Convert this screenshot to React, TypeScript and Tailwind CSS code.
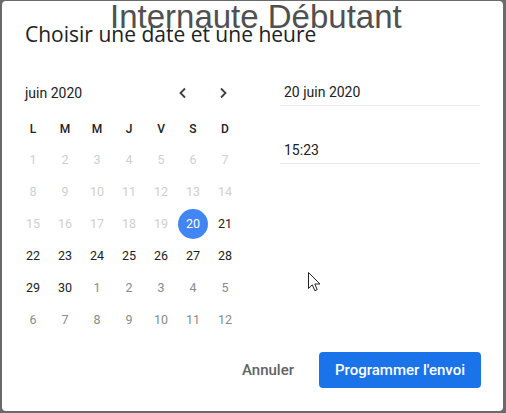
import React from 'react';

const weekDays = ['L', 'M', 'M', 'J', 'V', 'S', 'D'];

type Day = { n: number; kind: 'past' | 'cur' | 'next' | 'sel' };

function buildDays(): Day[] {
  const days: Day[] = [];
  for (let i = 1; i <= 30; i++) {
    days.push({ n: i, kind: i < 20 ? 'past' : i === 20 ? 'sel' : 'cur' });
  }
  for (let i = 1; i <= 12; i++) days.push({ n: i, kind: 'next' });
  return days;
}

const dayColor: Record<Day['kind'], string> = {
  past: 'text-[#cfcfcf]',
  cur: 'text-[#202124]',
  next: 'text-[#8a8a8a]',
  sel: 'text-white',
};

function Chevron({ dir }: { dir: 'left' | 'right' }) {
  return (
    <svg width="10" height="12" viewBox="0 0 10 12" fill="none">
      <path
        d={dir === 'left' ? 'M7 1.5 2.5 6 7 10.5' : 'M3 1.5 7.5 6 3 10.5'}
        stroke="#3c4043"
        strokeWidth="1.8"
      />
    </svg>
  );
}

function Calendar() {
  const days = buildDays();
  return (
    <div className="w-[224px] ml-[15px]">
      <div className="flex h-8 items-center justify-between pl-2 pr-[6px]">
        <span className="text-[14px] text-[#202124]">juin 2020</span>
        <div className="flex gap-4">
          <button className="flex h-6 w-6 items-center justify-center">
            <Chevron dir="left" />
          </button>
          <button className="flex h-6 w-6 items-center justify-center">
            <Chevron dir="right" />
          </button>
        </div>
      </div>
      <div className="mt-1 grid grid-cols-7">
        {weekDays.map((d, i) => (
          <div key={i} className="flex h-[31px] items-center justify-center text-[12px] font-medium text-[#202124]">
            {d}
          </div>
        ))}
        {days.map((d, i) => (
          <div key={i} className="flex h-8 items-center justify-center">
            <span
              className={`flex h-[30px] w-[30px] items-center justify-center rounded-full text-[12.5px] ${dayColor[d.kind]} ${
                d.kind === 'sel' ? 'bg-[#4285f4]' : ''
              }`}
            >
              {d.n}
            </span>
          </div>
        ))}
      </div>
    </div>
  );
}

function Field({ value }: { value: string }) {
  return (
    <div className="flex h-[27px] items-center border-b border-[#e8eaed] pl-1 text-[14px] text-[#202124]">
      {value}
    </div>
  );
}

export default function App() {
  return (
    <div className="h-[413px] w-[506px] bg-[#6a6a6a] pt-px pl-[2px] pr-[3px] pb-[2px]" style={{ fontFamily: 'Roboto, sans-serif' }}>
      <div className="relative flex h-full flex-col rounded-[4px] bg-white">
        <h1
          className="ml-[23px] mt-[19px] text-[21px] leading-7 text-[#202124]"
          style={{ fontFamily: '"Open Sans", sans-serif' }}
        >
          Choisir une date et une heure
        </h1>

        <div className="mt-[29px] flex">
          <Calendar />
          <div className="ml-[39px] mt-[2px] flex w-[200px] flex-col gap-[31px]">
            <Field value="20 juin 2020" />
            <Field value="15:23" />
          </div>
        </div>

        <div className="mt-4 flex justify-end gap-[9px] pr-[22px]">
          <button className="h-9 px-4 text-[15px] font-medium text-[#5f6368]">Annuler</button>
          <button className="h-9 rounded-[4px] bg-[#1a73e8] px-4 text-[15px] font-medium text-white">
            Programmer l'envoi
          </button>
        </div>

        <div
          className="pointer-events-none absolute left-[108px] top-[-1px] text-[33px] leading-none text-[#505050]"
          style={{ fontFamily: '"Liberation Sans", Arial, sans-serif' }}
        >
          Internaute Débutant
        </div>

        <svg className="absolute left-[306px] top-[271px]" width="13" height="21" viewBox="0 0 13 21">
          <path
            d="M0.5 0.5 L0.5 16.5 L4.3 12.8 L6.8 18.7 L9.2 17.7 L6.8 12 L12 12 Z"
            fill="white"
            stroke="#222"
            strokeWidth="1"
            strokeLinejoin="round"
          />
        </svg>
      </div>
    </div>
  );
}
